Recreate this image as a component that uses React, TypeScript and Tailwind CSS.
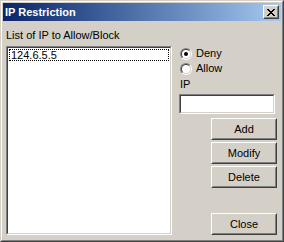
import React from "react";

const font = { fontFamily: '"Liberation Sans", Arial, sans-serif' };

function Radio({ checked, label }: { checked?: boolean; label: string }) {
  return (
    <div className="flex items-center h-[15px]">
      <div className="ml-[1px] w-[12px] h-[12px] rounded-full border border-t-[#808080] border-l-[#808080] border-b-white border-r-white">
        <div className="w-full h-full rounded-full border border-t-[#404040] border-l-[#404040] border-b-[#d4d0c8] border-r-[#d4d0c8] bg-white flex items-center justify-center">
          {checked && <div className="w-[4px] h-[4px] rounded-full bg-black" />}
        </div>
      </div>
      <span className="ml-[4px] text-[11px] leading-[13px] text-black">{label}</span>
    </div>
  );
}

function Button({ label, className = "" }: { label: string; className?: string }) {
  return (
    <div
      className={
        "w-[66px] h-[22px] border border-t-white border-l-white border-b-[#404040] border-r-[#404040] " +
        className
      }
    >
      <div className="w-full h-full border border-t-[#d4d0c8] border-l-[#d4d0c8] border-b-[#808080] border-r-[#808080] flex items-center justify-center text-[11px] leading-[13px] text-black">
        {label}
      </div>
    </div>
  );
}

export default function App() {
  return (
    <div style={font} className="w-[284px] h-[242px] bg-[#d4d0c8] select-none">
      <div className="w-full h-full border border-t-[#d4d0c8] border-l-[#d4d0c8] border-b-[#404040] border-r-[#404040]">
        <div className="w-full h-full border border-t-white border-l-white border-b-[#808080] border-r-[#808080] p-[1px] flex flex-col">
          {/* Title bar */}
          <div className="h-[18px] flex items-center bg-gradient-to-r from-[#0a246a] to-[#a6caf0]">
            <span className="ml-[2px] text-white font-bold text-[11px] leading-[13px]">IP Restriction</span>
            <div className="ml-auto mr-[2px] w-[16px] h-[14px] bg-[#d4d0c8] border border-t-white border-l-white border-b-[#404040] border-r-[#404040]">
              <div className="w-full h-full border border-t-[#d4d0c8] border-l-[#d4d0c8] border-b-[#808080] border-r-[#808080] flex items-center justify-center">
                <svg width="8" height="7" viewBox="0 0 8 7" shapeRendering="crispEdges">
                  <path
                    d="M0 0h2v1h-2zM6 0h2v1h-2zM1 1h2v1h-2zM5 1h2v1h-2zM2 2h4v1h-4zM3 3h2v1h-2zM2 4h4v1h-4zM1 5h2v1h-2zM5 5h2v1h-2zM0 6h2v1h-2zM6 6h2v1h-2z"
                    fill="#000"
                  />
                </svg>
              </div>
            </div>
          </div>
          {/* Body */}
          <div className="flex-1 flex pb-[4px]">
            {/* Left column */}
            <div className="ml-[3px] flex flex-col">
              <div className="mt-[8px] text-[11px] leading-[13px] text-black">List of IP to Allow/Block</div>
              <div className="mt-[4px] w-[166px] flex-1 border border-t-[#808080] border-l-[#808080] border-b-white border-r-white">
                <div className="w-full h-full border border-t-[#404040] border-l-[#404040] border-b-[#d4d0c8] border-r-[#d4d0c8] bg-white">
                  <div className="mt-[1px] ml-[1px] mr-[1px] h-[12px] border border-dotted border-black flex items-center">
                    <span className="ml-[1px] text-[11px] leading-[11px] text-black">124.6.5.5</span>
                  </div>
                </div>
              </div>
            </div>
            {/* Right column */}
            <div className="ml-[7px] w-[98px] flex flex-col">
              <div className="mt-[25px]">
                <Radio checked label="Deny" />
                <Radio label="Allow" />
              </div>
              <div className="mt-[2px] ml-[1px] text-[11px] leading-[13px] text-black">IP</div>
              <div className="mt-[3px] w-[96px] h-[20px] border border-t-[#808080] border-l-[#808080] border-b-white border-r-white">
                <div className="w-full h-full border border-t-[#404040] border-l-[#404040] border-b-[#d4d0c8] border-r-[#d4d0c8] bg-white" />
              </div>
              <div className="mt-[4px] flex flex-col items-end gap-[2px]">
                <Button label="Add" />
                <Button label="Modify" />
                <Button label="Delete" />
              </div>
              <div className="mt-auto flex justify-end">
                <Button label="Close" />
              </div>
            </div>
          </div>
        </div>
      </div>
    </div>
  );
}
